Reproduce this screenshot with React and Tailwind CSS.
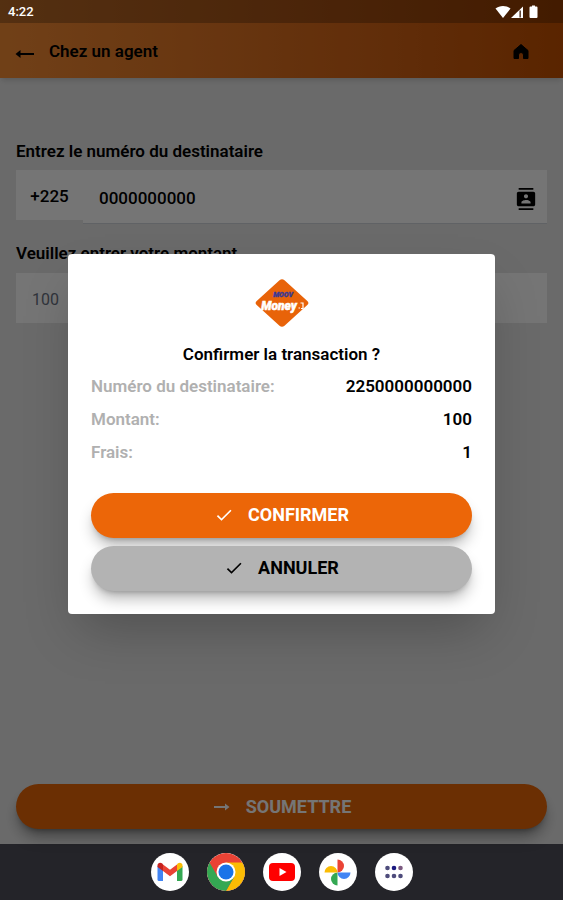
import { useState } from 'react';
import { MdCheck, MdContacts } from 'react-icons/md';

const details = [
    { label: 'Numéro du destinataire:', value: '2250000000000' },
    { label: 'Montant:', value: '100' },
    { label: 'Frais:', value: '1' },
];

const StatusBar = () => (
    <div className="relative z-20 flex h-[23px] items-center justify-between pr-6 pl-2 text-white">
        <span className="text-[13px] font-medium">4:22</span>
        <svg width="44" height="14" viewBox="0 0 44 14" fill="currentColor" aria-hidden="true">
            <path d="M0.500 3.600C4.500 0 11.500 0 15.500 3.600L8 13z" />
            <path d="M28 1.500V13H16z" />
            <path d="M24.500 5.500h1.300v7h-1.300z" fill="#3a1a08" />
            <path d="M35.500 1.500h1.500V0.500h3v1h1.500a1 1 0 0 1 1 1V12a1 1 0 0 1-1 1h-6a1 1 0 0 1-1-1V2.500a1 1 0 0 1 1-1z" />
        </svg>
    </div>
);

const MoneyLogo = () => (
    <svg className="h-12 w-[54px]" viewBox="0 0 54 48" role="img" aria-label="Moov Money">
        <path
            d="M24.500 1.200Q27 -0.700 29.500 1.200L52.300 22Q54.500 24 52.300 26L29.500 46.800Q27 48.700 24.500 46.800L1.700 26Q-0.500 24 1.700 22z"
            fill="#e86309"
        />
        <text x="28" y="18" textAnchor="middle" fontSize="7" stroke="#3b3a96" strokeWidth="0.4" className="fill-[#3b3a96] font-black italic">MOOV</text>
        <text x="24" y="31" textAnchor="middle" fontSize="12" stroke="#fff" strokeWidth="0.500" className="fill-white font-black italic">Money</text>
        <path d="M43.500 29h1.500M45.500 24h2.500v5.500h-2" fill="none" stroke="#fff" strokeWidth="1.200" />
    </svg>
);

const GmailIcon = () => (
    <svg width="26" height="20" viewBox="0 0 26 20" aria-hidden="true">
        <path d="M0.500 4v13.500Q0.500 19 2 19h4V8z" fill="#4285f4" />
        <path d="M25.500 4v13.500Q25.500 19 24 19h-4V8z" fill="#34a853" />
        <path d="M20 2.500V9l5.500-4V3.500C25.500 0.500 22.500 0 20.700 1.500z" fill="#fbbc04" />
        <path d="M6 9V2.500l7 5.300 7-5.300V9l-7 5.300z" fill="#ea4335" />
        <path d="M0.500 3.500V5L6 9V2.500L5.300 1.500C3.500 0 0.500 0.500 0.500 3.500z" fill="#c5221f" />
    </svg>
);

const ChromeIcon = () => (
    <svg width="38" height="38" viewBox="0 0 48 48" aria-hidden="true">
        <circle cx="24" cy="24" r="24" fill="#ea4335" />
        <path d="M24 12h20.800A24 24 0 0 1 24 48l10.400-18z" fill="#fbbc04" />
        <path d="M34.400 30L24 48A24 24 0 0 1 3.200 12l10.400 18L24 36z" fill="#34a853" />
        <circle cx="24" cy="24" r="12" fill="#fff" />
        <circle cx="24" cy="24" r="9.500" fill="#1a73e8" />
    </svg>
);

const YoutubeIcon = () => (
    <svg width="26" height="18" viewBox="0 0 26 18" aria-hidden="true">
        <rect width="26" height="18" rx="4" fill="#f00" />
        <path d="M10.500 5v8l7-4z" fill="#fff" />
    </svg>
);

const PhotosIcon = () => (
    <svg width="27" height="27" viewBox="0 0 27 27" aria-hidden="true">
        <path d="M13.500 0.500a6.500 6.500 0 0 1 0 13z" fill="#ea4335" />
        <path d="M26.500 13.500a6.500 6.500 0 0 1-13 0z" fill="#4285f4" />
        <path d="M13.500 26.500a6.500 6.500 0 0 1 0-13z" fill="#34a853" />
        <path d="M0.500 13.500a6.500 6.500 0 0 1 13 0z" fill="#fbbc04" />
    </svg>
);

const AppsIcon = () => (
    <svg width="20" height="14" viewBox="0 0 20 14" fill="#4e4c7c" aria-hidden="true">
        <circle cx="3.500" cy="3" r="2.300" />
        <circle cx="10" cy="3" r="2.300" fill="#1c1a80" />
        <circle cx="16.500" cy="3" r="2.300" fill="#7c5a80" />
        <circle cx="3.500" cy="11" r="2.300" />
        <circle cx="10" cy="11" r="2.300" />
        <circle cx="16.500" cy="11" r="2.300" />
    </svg>
);

const apps = [
    { name: 'Gmail', Icon: GmailIcon },
    { name: 'Chrome', Icon: ChromeIcon },
    { name: 'YouTube', Icon: YoutubeIcon },
    { name: 'Photos', Icon: PhotosIcon },
    { name: 'Applications', Icon: AppsIcon },
];

const App = () => {
    const [phone, setPhone] = useState('0000000000');
    const [amount, setAmount] = useState('');
    const [open, setOpen] = useState(true);

    return (
        <div className="flex min-h-screen flex-col bg-[#242429] font-['Roboto',sans-serif] text-[17px] text-black">
            <div className="relative flex flex-1 flex-col bg-[#e8e8e8]">
                {/* Header */}
                <header className="bg-linear-to-r from-[#f58c34] to-[#c45000] shadow-md">
                    <div className="bg-black/25">
                        <StatusBar />
                    </div>
                    <div className="flex h-[55px] items-center pt-0.5 pr-8 pl-[15px]">
                        <button type="button" aria-label="Retour" className="pt-1">
                            <svg width="20" height="12" viewBox="0 0 20 12" fill="none" stroke="currentColor" strokeWidth="2" aria-hidden="true">
                                <path d="M19 6H3" />
                                <path d="M0.500 6l5-4v8z" fill="currentColor" stroke="none" />
                            </svg>
                        </button>
                        <h1 className="ml-[14px] flex-1 font-semibold">Chez un agent</h1>
                        <button type="button" aria-label="Accueil">
                            <svg width="20" height="20" viewBox="0 0 20 20" fill="currentColor" stroke="currentColor" aria-hidden="true">
                                <path d="M10 2.500L17 8.500V16.500h-4.500v-3.500a2.500 2.500 0 0 0-5 0V16.500H3V8.500z" strokeLinejoin="round" />
                            </svg>
                        </button>
                    </div>
                </header>

                {/* Form */}
                <form className="flex flex-1 flex-col px-4 pt-[62px] pb-[15px]" onSubmit={(e) => e.preventDefault()}>
                    <label htmlFor="phone" className="leading-[22px] font-semibold">Entrez le numéro du destinataire</label>
                    <div className="mt-2 flex items-start">
                        <span className="flex h-[50px] w-[67px] items-center justify-center bg-white pt-1 font-medium">+225</span>
                        <div className="flex h-[54px] flex-1 items-center border-b border-gray-300 bg-white pt-1 pr-2.5 pl-4">
                            <input
                                id="phone"
                                type="tel"
                                value={phone}
                                onChange={(e) => setPhone(e.target.value)}
                                className="min-w-0 flex-1 font-medium outline-none"
                            />
                            <button type="button" aria-label="Contacts">
                                <MdContacts className="size-[22px]" />
                            </button>
                        </div>
                    </div>

                    <label htmlFor="amount" className="mt-[18px] leading-[22px] font-semibold">Veuillez entrer votre montant</label>
                    <input
                        id="amount"
                        type="text"
                        placeholder="100"
                        value={amount}
                        onChange={(e) => setAmount(e.target.value)}
                        className="mt-[9px] h-[50px] bg-white px-4 pt-0.5 text-base outline-none placeholder:text-gray-500"
                    />

                    <button
                        type="submit"
                        className="mt-auto flex h-[45px] items-center justify-center gap-3.5 rounded-full bg-[#e96608] text-lg font-bold text-white shadow-lg shadow-black/40"
                    >
                        <svg width="20" height="12" viewBox="0 0 20 12" aria-hidden="true">
                            <path d="M2 5h11V2.500L17.500 6 13 9.500V7H2z" fill="currentColor" />
                        </svg>
                        SOUMETTRE
                    </button>
                </form>

                {/* Confirmation dialog */}
                {open && (
                    <div className="absolute inset-0 z-10 flex items-center bg-black/54 px-17 pt-[23px]">
                        <div
                            role="dialog"
                            aria-labelledby="dialog-title"
                            className="flex flex-1 flex-col rounded bg-white px-[23px] pt-[25px] pb-[23px] shadow-2xl"
                        >
                            <div className="flex justify-center">
                                <MoneyLogo />
                            </div>
                            <h2 id="dialog-title" className="mt-4 text-center leading-[22px] font-semibold">Confirmer la transaction ?</h2>
                            <dl className="mt-1.5">
                                {details.map((item) => (
                                    <div key={item.label} className="flex h-[33px] items-center justify-between font-semibold">
                                        <dt className="text-[#b0b0b0]">{item.label}</dt>
                                        <dd>{item.value}</dd>
                                    </div>
                                ))}
                            </dl>
                            <div className="mt-[23px] flex flex-col gap-2">
                                <button
                                    type="button"
                                    onClick={() => setOpen(false)}
                                    className="flex h-[45px] items-center justify-center gap-3.5 rounded-full bg-[#ec6608] text-lg font-bold text-white shadow-lg shadow-black/30"
                                >
                                    <MdCheck className="size-5" />
                                    CONFIRMER
                                </button>
                                <button
                                    type="button"
                                    onClick={() => setOpen(false)}
                                    className="flex h-[45px] items-center justify-center gap-3.5 rounded-full bg-[#b3b3b3] text-lg font-bold shadow-lg shadow-black/30"
                                >
                                    <MdCheck className="size-5" />
                                    ANNULER
                                </button>
                            </div>
                        </div>
                    </div>
                )}
            </div>

            {/* Taskbar */}
            <nav className="flex h-14 items-center justify-center gap-[18px]">
                {apps.map(({ name, Icon }) => (
                    <button
                        key={name}
                        type="button"
                        aria-label={name}
                        className="flex size-[38px] items-center justify-center overflow-hidden rounded-full bg-white"
                    >
                        <Icon />
                    </button>
                ))}
            </nav>
        </div>
    );
};

export default App;
